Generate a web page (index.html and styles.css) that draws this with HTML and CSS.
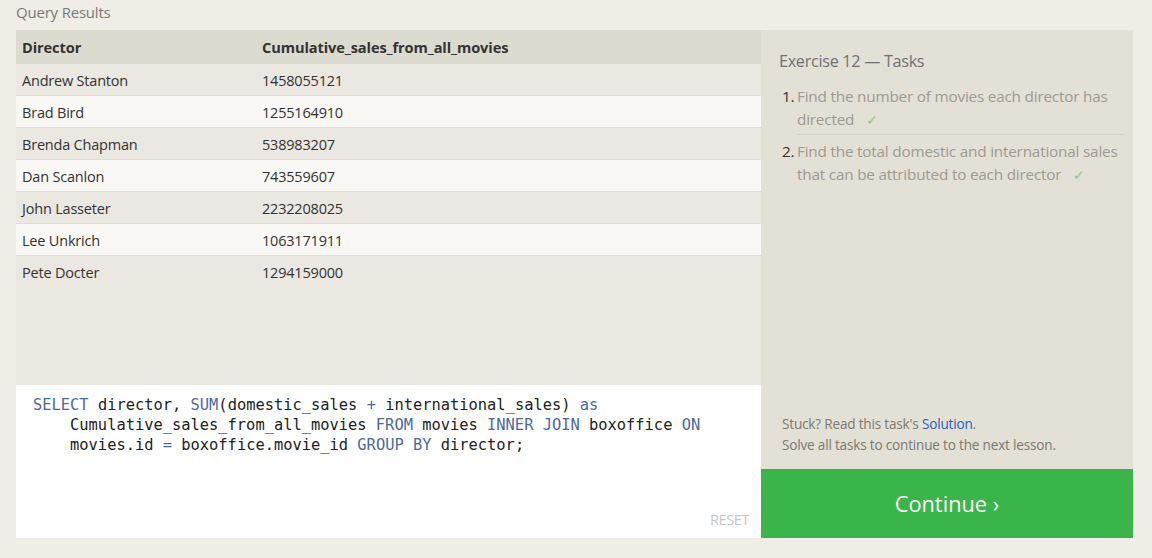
FILE: index.html
```html
<!DOCTYPE html>
<html>
<head>
<meta charset="utf-8">
<link rel="stylesheet" href="styles.css">
</head>
<body>
<div class="page">
  <div class="title">Query Results</div>
  <div class="main">
    <div class="left">
      <div class="results">
        <table class="table">
          <thead>
            <tr><th class="c1">Director</th><th>Cumulative_sales_from_all_movies</th></tr>
          </thead>
          <tbody>
            <tr><td>Andrew Stanton</td><td>1458055121</td></tr>
            <tr><td>Brad Bird</td><td>1255164910</td></tr>
            <tr><td>Brenda Chapman</td><td>538983207</td></tr>
            <tr><td>Dan Scanlon</td><td>743559607</td></tr>
            <tr><td>John Lasseter</td><td>2232208025</td></tr>
            <tr><td>Lee Unkrich</td><td>1063171911</td></tr>
            <tr><td>Pete Docter</td><td>1294159000</td></tr>
          </tbody>
        </table>
      </div>
      <div class="editor">
        <pre class="code"><span class="kw">SELECT</span> director, <span class="kw">SUM</span>(domestic_sales <span class="kw">+</span> international_sales) <span class="kw">as</span>
    Cumulative_sales_from_all_movies <span class="kw">FROM</span> movies <span class="kw">INNER JOIN</span> boxoffice <span class="kw">ON</span>
    movies.id <span class="kw">=</span> boxoffice.movie_id <span class="kw">GROUP BY</span> director;</pre>
        <div class="reset">RESET</div>
      </div>
    </div>
    <div class="right">
      <div class="tasks">
        <div class="tasks-title">Exercise 12 — Tasks</div>
        <ol class="task-list">
          <li class="task"><span class="num">1.</span><span class="task-text">Find the number of movies each director has directed<span class="check">✓</span></span></li>
          <li class="task"><span class="num">2.</span><span class="task-text">Find the total domestic and international sales that can be attributed to each director<span class="check">✓</span></span></li>
        </ol>
        <div class="help">
          <div>Stuck? Read this task's <span class="link">Solution</span>.</div>
          <div>Solve all tasks to continue to the next lesson.</div>
        </div>
      </div>
      <div class="continue">Continue ›</div>
    </div>
  </div>
</div>
</body>
</html>
```

FILE: styles.css
```css
html, body {
  margin: 0;
  padding: 0;
  background: #efede6;
  font-family: "Open Sans", "Noto Sans", sans-serif;
}
.page {
  padding: 0 19px 0 16px;
}
.title {
  height: 30px;
  line-height: 24px;
  font-size: 15px;
  color: #7a7a76;
  letter-spacing: -0.2px;
}
.main {
  display: flex;
  height: 508px;
}
.left {
  width: 745px;
  display: flex;
  flex-direction: column;
}
.results {
  height: 355px;
  background: #eae8e1;
}
.table {
  width: 100%;
  border-collapse: collapse;
  color: #333;
}
.table th {
  text-align: left;
  background: #dcdbd0;
  height: 34px;
  padding: 0 6px;
  font-weight: 700;
  font-size: 14.6px;
  color: #333;
  letter-spacing: -0.1px;
}
.table th.c1 { width: 228px; }
.table td {
  height: 30px;
  padding: 1px 6px 0 6px;
  border-bottom: 1px solid #e0ded6;
  font-size: 14.5px;
  letter-spacing: -0.2px;
}
.table tbody tr:nth-child(even) td {
  background: #f9f8f5;
}
.table tbody tr:last-child td { border-bottom: none; }
.editor {
  flex: 1;
  background: #fff;
  position: relative;
  padding: 10px 17px;
}
.code {
  margin: 0;
  font-family: "DejaVu Sans Mono", "Liberation Mono", monospace;
  font-size: 15.4px;
  line-height: 20px;
  color: #222;
}
.kw { color: #4d6a9e; }
.reset {
  position: absolute;
  right: 12px;
  bottom: 9px;
  font-size: 14.5px;
  color: #c6c6c6;
  letter-spacing: -0.4px;
}
.right {
  width: 372px;
  display: flex;
  flex-direction: column;
}
.tasks {
  flex: 1;
  background: #e3e0d6;
  padding: 20px 9px 14px 18px;
  display: flex;
  flex-direction: column;
}
.tasks-title {
  font-size: 16.2px;
  color: #6f7178;
  margin-bottom: 13px;
  letter-spacing: -0.3px;
}
.task-list {
  list-style: none;
  margin: 0;
  padding: 0 0 0 3px;
}
.task {
  display: flex;
  font-size: 15.3px;
  line-height: 23px;
  color: #9d9b93;
  padding: 0 0 4px 0;
  letter-spacing: -0.2px;
}
.task + .task {
  padding-top: 5px;
}
.task:first-child {
  position: relative;
}
.task:first-child::after {
  content: "";
  position: absolute;
  left: 15px;
  right: 0;
  bottom: 0;
  border-bottom: 1px solid #d6d3c8;
}
.num {
  color: #333;
  width: 15px;
  flex: none;
}
.check {
  display: inline-block;
  color: #86c98f;
  margin-left: 12px;
  font-size: 14px;
}
.help {
  margin-top: auto;
  font-size: 13.6px;
  line-height: 21px;
  color: #7b7a73;
  padding-left: 3px;
  letter-spacing: -0.2px;
}
.link { color: #2c5fb8; }
.continue {
  height: 69px;
  background: #3ab54a;
  color: #fff;
  font-size: 21.8px;
  display: flex;
  align-items: center;
  justify-content: center;
}
```
